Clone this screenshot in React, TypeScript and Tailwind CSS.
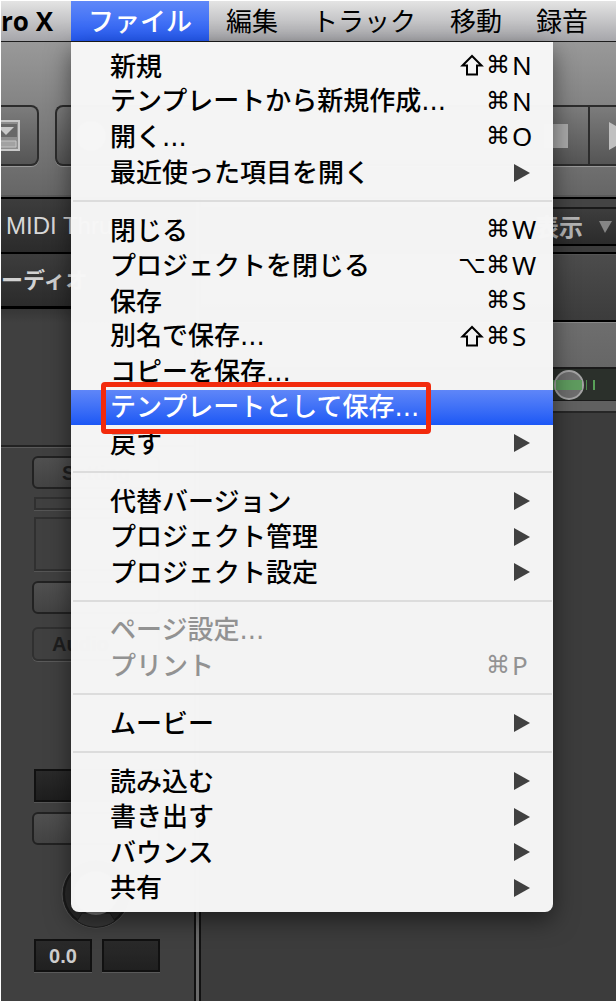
import { Fragment } from "react";

type MenuItem = {
  label: string;
  dots?: boolean;
  mod?: "shift" | "option";
  keyName?: string;
  submenu?: boolean;
  disabled?: boolean;
  active?: boolean;
};

const fileMenu: MenuItem[][] = [
  [
    { label: "新規", mod: "shift", keyName: "N" },
    { label: "テンプレートから新規作成", dots: true, keyName: "N" },
    { label: "開く", dots: true, keyName: "O" },
    { label: "最近使った項目を開く", submenu: true },
  ],
  [
    { label: "閉じる", keyName: "W" },
    { label: "プロジェクトを閉じる", mod: "option", keyName: "W" },
    { label: "保存", keyName: "S" },
    { label: "別名で保存", dots: true, mod: "shift", keyName: "S" },
    { label: "コピーを保存", dots: true },
    { label: "テンプレートとして保存", dots: true, active: true },
    { label: "戻す", submenu: true },
  ],
  [
    { label: "代替バージョン", submenu: true },
    { label: "プロジェクト管理", submenu: true },
    { label: "プロジェクト設定", submenu: true },
  ],
  [
    { label: "ページ設定", dots: true, disabled: true },
    { label: "プリント", keyName: "P", disabled: true },
  ],
  [{ label: "ムービー", submenu: true }],
  [
    { label: "読み込む", submenu: true },
    { label: "書き出す", submenu: true },
    { label: "バウンス", submenu: true },
    { label: "共有", submenu: true },
  ],
];

const menuTitles = ["編集", "トラック", "移動", "録音"];

function ShiftIcon() {
  return (
    <svg role="img" aria-label="⇧" width="26" height="24" viewBox="0 0 26 24" fill="none" stroke="currentColor" strokeWidth="2">
      <path d="M12 3 2.5 12.5H7V21.5H17V12.5H21.5Z" />
    </svg>
  );
}

function MenuRow({ item }: { item: MenuItem }) {
  return (
    <button
      role="menuitem"
      disabled={item.disabled}
      className={`relative flex h-[35px] w-full items-center justify-between pl-[39px] pr-[15px] text-left odd:h-9 ${
        item.active ? "z-10 bg-linear-to-b from-[#5f86f8] to-[#1b57f5] text-white" : "text-black"
      } disabled:text-[#929292]`}
    >
      <span className="flex items-baseline whitespace-nowrap pb-[3px] font-medium">
        {item.label}
        {item.dots && <span className="font-['DejaVu_Sans',sans-serif]">...</span>}
      </span>
      {item.keyName && (
        <span className="flex items-center pb-0.5">
          {item.mod === "shift" && <ShiftIcon />}
          {item.mod === "option" && (
            <span className="w-[28px] font-['DejaVu_Sans',sans-serif] text-2xl leading-none">⌥</span>
          )}
          <span className="w-[26px] font-['DejaVu_Sans',sans-serif] text-2xl leading-none">⌘</span>
          <span className="w-[26px] font-['Noto_Sans',sans-serif] leading-none">{item.keyName}</span>
        </span>
      )}
      {item.submenu && (
        <svg className="h-[18px] w-[26px]" viewBox="0 0 26 18" fill="#404040">
          <path d="M2 0 18 9 2 18Z" />
        </svg>
      )}
      {item.active && (
        <span className="pointer-events-none absolute -top-2 left-[30px] h-[52px] w-[330px] rounded-sm border-[5px] border-[#f22a0c]" />
      )}
    </button>
  );
}

function FileMenu() {
  return (
    <div
      role="menu"
      className="absolute left-0 top-[41px] z-20 w-[482px] rounded-b-lg bg-[#f6f6f6]/99 pb-[7px] pt-1.5 shadow-[0_8px_24px_rgba(0,0,0,0.5)]"
    >
      {fileMenu.map((group, i) => (
        <Fragment key={i}>
          {i > 0 && (
            <div className="ml-0.5 mr-px flex h-[22px] items-center">
              <div className="h-0.5 w-full bg-[#dcdcdc]" />
            </div>
          )}
          <div>
            {group.map((item) => (
              <MenuRow key={item.label} item={item} />
            ))}
          </div>
        </Fragment>
      ))}
    </div>
  );
}

function MenuBar() {
  return (
    <nav className="relative flex h-[41px] items-stretch whitespace-nowrap border-b border-[#1c1c1c] bg-linear-to-b from-[#e4e4e4] to-[#a6a6aa] text-black">
      <button className="w-[70px] text-left font-['Open_Sans',sans-serif] font-bold">ro X</button>
      <div className="relative flex">
        <button className="bg-linear-to-b from-[#6088f8] to-[#2459f3] px-[17px] pb-0.5 font-medium text-white">ファイル</button>
        <FileMenu />
      </div>
      {menuTitles.map((title) => (
        <button key={title} className="px-[17px] pb-0.5">{title}</button>
      ))}
    </nav>
  );
}

function Toolbar() {
  return (
    <div className="flex h-[155px] items-start gap-4 overflow-hidden border-b-2 border-[#5a5a5a] bg-linear-to-b from-[#999999] to-[#666666] pt-[63px]">
      <button
        aria-label="ライブラリ"
        className="flex h-[61px] w-[38px] shrink-0 items-center rounded-r-lg border-2 border-l-0 border-[#2c2c2c] bg-linear-to-b from-[#7c7c7c] to-[#555555] shadow-[0_1px_0_#999]"
      >
        <svg width="21" height="34" viewBox="0 0 21 34">
          <path d="M0 2H18V31H0" fill="#8e8e8e" stroke="#c8c8c8" strokeWidth="2" />
          <path d="M0 5H16V18H0Z" fill="#686868" />
          <path d="M0 8H13L5 16 0 11Z" fill="#c8c8c8" />
          <path d="M0 22H15V28H0" fill="#a2a2a2" stroke="#c4c4c4" />
        </svg>
      </button>
      <div className="flex h-[61px] flex-1 items-stretch overflow-hidden rounded-l-lg border-2 border-r-0 border-[#2c2c2c] bg-linear-to-b from-[#7c7c7c] to-[#555555] shadow-[0_1px_0_#999]">
        <button aria-label="クイックヘルプ" className="px-4">
          <svg width="36" height="36" viewBox="0 0 36 36"><circle cx="18" cy="18" r="15" fill="#c0c0c0" /></svg>
        </button>
        <div className="flex-1" />
        <button aria-label="停止" className="flex w-[66px] items-center justify-center border-r-2 border-[#2c2c2c]">
          <svg width="24" height="24"><rect width="24" height="24" fill="#aaaaaa" /></svg>
        </button>
        <button aria-label="再生" className="flex w-[26px] items-center justify-end">
          <svg width="7" height="28" viewBox="0 0 7 28"><path d="M0 0 7 4V24L0 28Z" fill="#c0c0c0" /></svg>
        </button>
      </div>
    </div>
  );
}

function Inspector() {
  const stripButton =
    "h-[33px] shrink-0 rounded-md border-2 border-[#222222] bg-linear-to-b from-[#505050] to-[#434343] text-xl font-bold leading-none text-[#1e1e1e]";
  return (
    <aside className="flex w-[193px] shrink-0 flex-col bg-[#404040] font-['Liberation_Sans','Noto_Sans_CJK_JP',sans-serif]">
      <div className="flex h-[55px] shrink-0 items-center border-b-2 border-black bg-linear-to-b from-[#3d3d3d] to-[#2b2b2b] pl-[5px] text-2xl text-[#d8d8d8]">
        MIDI Thru
      </div>
      <div className="flex h-[55px] shrink-0 items-center border-b-[3px] border-black bg-linear-to-b from-[#3d3d3d] to-[#2b2b2b] pt-0.5 text-[22px] font-bold text-[#d2d2d2]">
        ーディオ
      </div>
      <div className="h-[138px] shrink-0 border-b-2 border-[#222222] bg-linear-to-b from-[#363636] to-[#404040] to-10%" />
      <div className="flex flex-col border-t border-[#5a5a5a] pb-[29px] pl-[31px] pr-[34px] pt-2">
        <button className={stripButton}>Setting</button>
        <div className="ml-0.5 mt-2 h-[13px] border-2 border-[#303030] shadow-[0_1px_0_#555]" />
        <div className="ml-0.5 mt-[7px] h-[54px] border-2 border-[#303030] shadow-[0_1px_0_#555]" />
        <button aria-label="入力" className={`${stripButton} mt-2.5`} />
        <button className="mt-[13px] h-[34px] rounded-md border-2 border-[#303030] pl-[18px] text-left text-xl font-bold leading-none text-[#1e1e1e] shadow-[0_1px_0_#5a5a5a]">
          Audio
        </button>
        <div className="ml-0.5 mt-[108px] h-[33px] border-2 border-[#111111] bg-linear-to-b from-[#2a2a2a] to-[#1e1e1e] shadow-[0_1px_0_#555]" />
        <button aria-label="オートメーション" className={`${stripButton} mt-2.5`} />
        <svg className="mt-3.5 h-[70px] w-[70px] self-center" viewBox="0 0 70 70">
          <circle cx="35" cy="35" r="34" fill="#262626" stroke="#555555" />
          <circle cx="35" cy="35" r="32" fill="#2b2b2b" stroke="#1a1a1a" strokeWidth="2" />
          <path d="M21 54 16 62A32 32 0 0 0 54 62L49 54Z" fill="#383838" stroke="#1f1f1f" />
          <circle cx="35" cy="34" r="22" fill="#808080" />
        </svg>
        <div className="ml-0.5 mt-2.5 flex gap-2.5">
          <div className="flex h-[33px] flex-1 items-center justify-center border-2 border-[#111111] bg-linear-to-b from-[#2a2a2a] to-[#202020] text-xl font-bold text-[#cccccc] shadow-[0_1px_0_#5a5a5a]">
            0.0
          </div>
          <div className="h-[33px] flex-1 border-2 border-[#111111] bg-linear-to-b from-[#2a2a2a] to-[#202020] shadow-[0_1px_0_#5a5a5a]" />
        </div>
      </div>
    </aside>
  );
}

function TracksArea() {
  return (
    <main className="flex min-w-0 flex-1 flex-col bg-[#3c3c3c]">
      <div className="h-2.5 border-b-2 border-[#1a1a1a] bg-[#444444]" />
      <div className="flex h-[37px] items-center justify-end gap-4 border-b-2 border-black bg-linear-to-b from-[#3d3d3d] to-[#2b2b2b] pr-1 text-2xl font-bold text-[#b4b4b4]">
        <span className="pb-0.5">表示</span>
        <svg width="13" height="12" viewBox="0 0 13 12"><path d="M0 0H13L6 12Z" fill="#858585" /></svg>
      </div>
      <div className="h-2 border-b-2 border-black bg-[#3c3c3c]" />
      <div className="h-[68px] border-b-2 border-t border-b-black border-t-[#555555] bg-linear-to-b from-[#4c4c4c] to-[#3c3c3c]" />
      <div className="h-[47px] border-b-2 border-t border-b-[#1a1a1a] border-t-[#888888] bg-linear-to-b from-[#6e6e6e] to-[#666666]" />
      <div className="flex h-8 items-center justify-end border-b border-[#1a1a1a] bg-[#2b302b] pr-5">
        {/* volume fader */}
        <svg width="44" height="30" viewBox="0 0 44 30">
          <path d="M0 10H31V20H0Z" fill="#4c8a4c" />
          <path d="M34 10h1V20h-1Z" fill="#4c8a4c" />
          <path d="M41 10h2V20h-2Z" fill="#58a058" />
          <circle cx="17" cy="15" r="14" fill="#6e6e6e" stroke="#a4a4a4" strokeWidth="2" />
          <path d="M4 10H30V20H4Z" fill="#5f9c5f" />
        </svg>
      </div>
      <div className="h-3 border-b-2 border-[#262626] bg-[#606060]" />
    </main>
  );
}

export default function App() {
  return (
    <div className="flex min-h-screen flex-col overflow-hidden bg-white pb-px pl-px pt-px font-['Noto_Sans_CJK_JP',sans-serif] text-[26px] leading-none">
      <MenuBar />
      <Toolbar />
      <div className="flex flex-1 border-t-2 border-black bg-[#3c3c3c]">
        <Inspector />
        <div className="w-[7px] shrink-0 border-x-2 border-[#111111] bg-[#6a6a6a]" />
        <TracksArea />
      </div>
    </div>
  );
}
